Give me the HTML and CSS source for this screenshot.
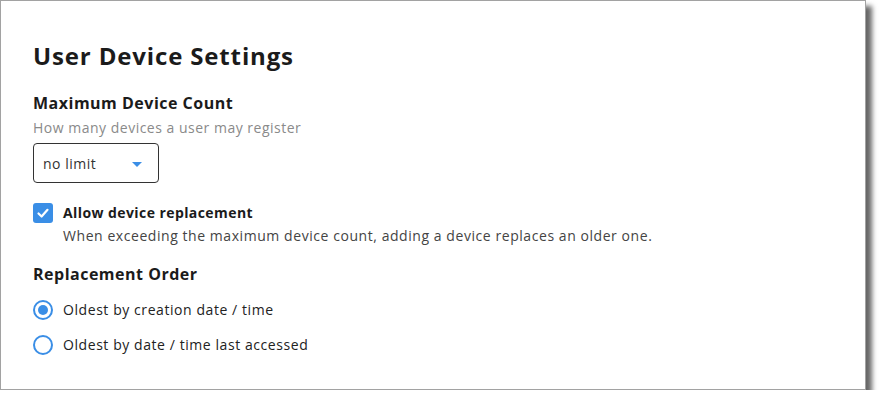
FILE: index.html
```html
<!DOCTYPE html>
<html lang="en">
<head>
<meta charset="utf-8">
<title>User Device Settings</title>
<link rel="stylesheet" href="styles.css">
</head>
<body>
<div class="card">
  <h1 class="title">User Device Settings</h1>

  <section class="group">
    <h2 class="group-title">Maximum Device Count</h2>
    <p class="hint">How many devices a user may register</p>
    <div class="select">
      <span class="select-value">no limit</span>
      <span class="caret"></span>
    </div>
  </section>

  <div class="check-row">
    <span class="checkbox">
      <svg width="20" height="20" viewBox="0 0 20 20"><polyline points="5.5,10.5 8.6,13.5 14.5,6.8" fill="none" stroke="#fff" stroke-width="2.2" stroke-linecap="round" stroke-linejoin="round"/></svg>
    </span>
    <div class="check-text">
      <div class="check-label">Allow device replacement</div>
      <div class="check-desc">When exceeding the maximum device count, adding a device replaces an older one.</div>
    </div>
  </div>

  <section class="group order">
    <h2 class="group-title">Replacement Order</h2>
    <div class="radios">
      <div class="radio-row"><span class="radio checked"></span><span class="radio-label">Oldest by creation date / time</span></div>
      <div class="radio-row"><span class="radio"></span><span class="radio-label">Oldest by date / time last accessed</span></div>
    </div>
  </section>
</div>
</body>
</html>
```
FILE: styles.css
```css
html, body {
  margin: 0;
  padding: 0;
  background: #ffffff;
}
body {
  font-family: "Open Sans", "Noto Sans", sans-serif;
  color: #1c1c1c;
}
.card {
  box-sizing: border-box;
  width: 866px;
  height: 390px;
  border: 1px solid #a2a2a2;
  background: #fff;
  box-shadow: 6px 6px 5px rgba(0, 0, 0, 0.6);
  padding: 40px 32px 0 32px;
}
.title {
  margin: 0;
  font-size: 24px;
  line-height: 30px;
  font-weight: 700;
  letter-spacing: 0.85px;
  color: #1b1b1b;
}
.group {
  margin-top: 22px;
}
.group-title {
  margin: 0;
  font-size: 16px;
  line-height: 20px;
  font-weight: 700;
  letter-spacing: 0.5px;
  color: #1b1b1b;
}
.hint {
  margin: 5px 0 0 0;
  font-size: 14px;
  line-height: 20px;
  letter-spacing: 0.5px;
  color: #8a8a8a;
}
.select {
  margin-top: 5px;
  box-sizing: border-box;
  width: 126px;
  height: 40px;
  border: 1px solid #333;
  border-radius: 4px;
  display: flex;
  align-items: center;
  padding: 0 0 0 9px;
}
.select-value {
  font-size: 14px;
  letter-spacing: 0.5px;
  color: #333;
  width: 89px;
}
.caret {
  width: 0;
  height: 0;
  border-left: 5px solid transparent;
  border-right: 5px solid transparent;
  border-top: 5px solid #3b8ee6;
  margin-top: 2px;
}
.check-row {
  margin-top: 20px;
  display: flex;
  gap: 10px;
}
.checkbox {
  width: 20px;
  height: 20px;
  border-radius: 3px;
  background: #3a8ee6;
  flex: none;
  display: block;
}
.checkbox svg { display: block; }
.check-label {
  font-size: 14px;
  line-height: 20px;
  font-weight: 700;
  letter-spacing: 0.42px;
  color: #1b1b1b;
}
.check-desc {
  margin-top: 3px;
  font-size: 14px;
  line-height: 20px;
  letter-spacing: 0.56px;
  color: #444;
}
.order {
  margin-top: 18px;
}
.radios {
  margin-top: 16px;
  display: flex;
  flex-direction: column;
  gap: 15px;
}
.radio-row {
  display: flex;
  align-items: center;
  gap: 10px;
  height: 20px;
}
.radio {
  box-sizing: border-box;
  width: 20px;
  height: 20px;
  border: 2px solid #3a8ee6;
  border-radius: 50%;
  flex: none;
  display: flex;
  align-items: center;
  justify-content: center;
}
.radio.checked::after {
  content: "";
  width: 10px;
  height: 10px;
  border-radius: 50%;
  background: #3a8ee6;
}
.radio-label {
  font-size: 14px;
  line-height: 20px;
  letter-spacing: 0.57px;
  color: #222;
}
```
